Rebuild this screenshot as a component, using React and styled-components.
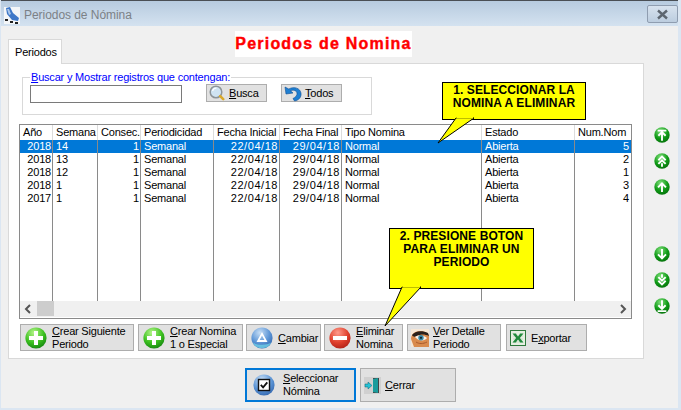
import React from 'react';
import styled, { createGlobalStyle } from 'styled-components';

const Global = createGlobalStyle`
  html, body { margin: 0; padding: 0; background: #f0f0f0; }
  body { font-family: "Liberation Sans", Arial, sans-serif; font-size: 11px; letter-spacing: -0.2px; color: #000; }
`;

const Window = styled.div`
  width: 681px;
  height: 410px;
  box-sizing: border-box;
  overflow: hidden;
  background: #f0f0f0;
  border-left: 1px solid #dbe6f2;
  border-right: 3px solid #dbe6f2;
  border-bottom: 2px solid #dbe6f2;
  position: relative;
`;

const TitleBar = styled.div`
  height: 26px;
  box-sizing: border-box;
  margin: 0 -3px 0 -1px;
  padding: 6px 3px 0 4px;
  display: flex;
  align-items: flex-start;
  gap: 4px;
  border-top: 1px solid #4a4f55;
  background: linear-gradient(#b7cbdf, #d4e2f0);
`;

const TitleText = styled.span`
  color: #7c8186;
  font-size: 12px;
  letter-spacing: -0.05px;
  line-height: 16px;
  flex: 1;
`;

const CloseButton = styled.div`
  width: 31px;
  height: 18px;
  margin-top: -2px;
  box-sizing: border-box;
  border: 1px solid #8f9db0;
  border-radius: 2px;
  background: linear-gradient(#d7e2ee, #bccddf);
  display: flex;
  align-items: center;
  justify-content: center;
`;

const Body = styled.div`
  padding: 5px 0 0 7px;
`;

const TabStrip = styled.div`
  height: 32px;
  display: flex;
  align-items: flex-start;
`;

const Tab = styled.div`
  width: 54px;
  height: 25px;
  margin-top: 8px;
  box-sizing: border-box;
  position: relative;
  z-index: 1;
  background: #fff;
  border: 1px solid #d9d9d9;
  border-bottom: none;
  padding: 6px 0 0 6px;
  line-height: 13px;
`;

const Heading = styled.h1`
  margin: 0 0 0 173px;
  height: 26px;
  width: 177px;
  background: #fff;
  color: #ff0000;
  font-size: 16px;
  font-weight: bold;
  line-height: 25px;
  letter-spacing: 1.2px;
  white-space: nowrap;
  text-align: center;
  -webkit-text-stroke: 0.4px #ff0000;
`;

const Content = styled.div`
  display: flex;
  align-items: flex-start;
`;

const Panel = styled.div`
  position: relative;
  width: 636px;
  height: 296px;
  box-sizing: border-box;
  background: #fff;
  border: 1px solid #d9d9d9;
  padding: 6px 0 0 10px;
`;

const SearchGroup = styled.fieldset`
  margin: 0 0 9px 3px;
  padding: 0 0 0 7px;
  width: 350px;
  height: 45px;
  box-sizing: border-box;
  border: 1px solid #d9d9d9;
  min-width: 0;
`;

const SearchLegend = styled.legend`
  color: #0000ff;
  font-size: 11px;
  line-height: 13px;
  padding: 1px 1px 0;
  margin-left: 0;
`;

const SearchRow = styled.div`
  display: flex;
  align-items: flex-start;
`;

const SearchInput = styled.div`
  width: 152px;
  height: 18px;
  box-sizing: border-box;
  border: 1px solid #7a7a7a;
  margin: 1px 24px 0 0;
`;

const SmallButton = styled.div`
  width: 61px;
  height: 18px;
  margin-right: 14px;
  box-sizing: border-box;
  background: #e1e1e1;
  border: 1px solid #adadad;
  display: flex;
  align-items: center;
  gap: 3px;
  padding-left: 2px;
  line-height: 13px;
`;

const Grid = styled.div`
  width: 613px;
  height: 195px;
  box-sizing: border-box;
  border: 1px solid #8a8a8a;
  display: flex;
  flex-direction: column;
`;

const Table = styled.table`
  border-collapse: separate;
  border-spacing: 0;
  table-layout: fixed;
  width: 611px;
  flex: none;
`;

const HeadCell = styled.th`
  height: 15px;
  padding: 0 0 0 3px;
  font-weight: normal;
  font-size: 11px;
  line-height: 13px;
  text-align: left;
  white-space: nowrap;
  overflow: hidden;
  box-sizing: border-box;
  border-right: 1px solid ${p => (p.$last ? 'transparent' : '#dcdcdc')};
`;

const Cell = styled.td`
  height: 13px;
  padding: ${p => (p.$right ? '0 1px 0 0' : '0 0 0 3px')};
  font-size: 11px;
  line-height: 13px;
  letter-spacing: ${p => (p.$wide ? '0.55px' : '-0.2px')};
  text-align: ${p => (p.$right ? 'right' : 'left')};
  white-space: nowrap;
  overflow: hidden;
  box-sizing: border-box;
  color: ${p => (p.$selected ? '#fff' : '#000')};
  background: ${p => (p.$selected ? '#0078d7' : '#fff')};
  border-right: 1px solid ${p => (p.$last ? 'transparent' : '#8a8a8a')};
`;

const FillerCell = styled.td`
  height: 96px;
  padding: 0;
  box-sizing: border-box;
  border-right: 1px solid ${p => (p.$last ? 'transparent' : '#8a8a8a')};
`;

const ScrollBar = styled.div`
  height: 16px;
  flex: none;
  background: #f0f0f0;
  display: flex;
  align-items: center;
  justify-content: space-between;
  padding: 0 4px;
  position: relative;
`;

const ScrollThumb = styled.div`
  position: absolute;
  left: 17px;
  top: 0;
  width: 17px;
  height: 15px;
  background: #cdcdcd;
`;

const ActionRow = styled.div`
  display: flex;
  margin: 5px 0 0 1px;
`;

const ActionButton = styled.div`
  width: ${p => p.$w}px;
  height: 27px;
  margin-right: ${p => p.$gap}px;
  box-sizing: border-box;
  background: #e1e1e1;
  border: 1px solid #adadad;
  display: flex;
  align-items: center;
  gap: ${p => p.$iconGap ?? 5}px;
  padding-left: ${p => p.$pad ?? 4}px;
  line-height: 13px;
  white-space: nowrap;

  & > span {
    padding-top: 1px;
  }
`;

const SideColumn = styled.div`
  display: flex;
  flex-direction: column;
  gap: 10px;
  margin-left: 10px;
  padding-top: 64px;
`;

const SideGap = styled.div`
  height: 31px;
`;

const BottomRow = styled.div`
  display: flex;
  gap: 4px;
  margin: 9px 0 0 237px;
`;

const BottomButton = styled.div`
  width: ${p => p.$w}px;
  height: 34px;
  box-sizing: border-box;
  background: #e1e1e1;
  border: ${p => (p.$focus ? '2px solid #0078d7' : '1px solid #adadad')};
  display: flex;
  align-items: center;
  gap: ${p => p.$iconGap}px;
  padding-left: ${p => p.$pad}px;
  line-height: 13px;
`;

const Callout = styled.div`
  position: absolute;
  z-index: 2;
  left: ${p => p.$x}px;
  top: ${p => p.$y}px;
  width: ${p => p.$w}px;
  height: ${p => p.$h}px;
  box-sizing: border-box;
  background: #ffff00;
  border: 1px solid #000;
  padding-top: 1px;
  text-align: center;
  font-size: 12px;
  font-weight: bold;
  line-height: 13px;
  letter-spacing: 0.1px;
`;

const Tail = styled.svg`
  position: absolute;
  left: -8px;
  top: 100%;
  overflow: visible;
`;

const GradBall = ({ size = 22, tone = 'green', children }) => {
  const stops = {
    green: ['#b5f58a', '#3cc020', '#0d7a0d'],
    dark: ['#7fe07a', '#0f9a16', '#056a0a'],
    blue: ['#c7def5', '#5c95d6', '#2c5fa8'],
    red: ['#ff9c8c', '#e0402c', '#a81c14'],
  }[tone];
  const id = `ball-${tone}-${size}`;
  return (
    <svg width={size} height={size} viewBox="0 0 22 22" style={{ flex: 'none' }}>
      <defs>
        <radialGradient id={id} cx="40%" cy="25%" r="85%">
          <stop offset="0%" stopColor={stops[0]} />
          <stop offset="55%" stopColor={stops[1]} />
          <stop offset="100%" stopColor={stops[2]} />
        </radialGradient>
      </defs>
      <circle cx="11" cy="11" r="10.6" fill={`url(#${id})`} />
      {children}
    </svg>
  );
};

const PlusBall = () => (
  <GradBall>
    <path d="M9 4h4v5h5v4h-5v5H9v-5H4V9h5z" fill="#fff" />
  </GradBall>
);

const TriangleBall = () => (
  <GradBall tone="blue">
    <path d="M2 15.500c4 3 14 3 18 0-1.500 4-5 5.600-9 5.600S3.500 19.500 2 15.500z" fill="#6fd0e6" opacity="0.8" />
    <path d="M11 5l5.500 10h-11z M11 8.600L8.600 13h4.800z" fill="#fff" fillRule="evenodd" />
  </GradBall>
);

const MinusBall = () => (
  <GradBall tone="red">
    <rect x="4" y="9" width="14" height="4" fill="#fff" />
  </GradBall>
);

const CheckBall = () => (
  <GradBall tone="blue">
    <rect x="5.500" y="5.500" width="11" height="11" fill="#fff" stroke="#111" strokeWidth="1.400" />
    <path d="M7.800 10.800l2.300 2.500 4.200-5" fill="none" stroke="#111" strokeWidth="1.800" />
  </GradBall>
);

const Magnifier = () => (
  <svg width="17" height="16" viewBox="0 0 17 16" style={{ flex: 'none' }}>
    <circle cx="7" cy="7" r="5.800" fill="#cfe3f2" stroke="#8d9499" strokeWidth="1.500" />
    <path d="M3.500 6c.5-2 2-3 4-3" stroke="#fff" strokeWidth="1.200" fill="none" />
    <path d="M11.200 11.200l3 3" stroke="#d9a92c" strokeWidth="2.600" strokeLinecap="round" />
  </svg>
);

const UndoIcon = () => (
  <svg width="18" height="17" viewBox="0 0 18 17" style={{ flex: 'none' }}>
    <path d="M1 2l1 7 7-1-2.500-2.200c2.500-1.300 6-.5 6.500 2.200.4 2.300-1.500 4.400-4 5.500L10.500 16c4.500-.7 7-4 6.500-7.800C16.300 3.200 10 1 4.800 4z" fill="#1f7fd1" stroke="#0f4f96" strokeWidth="0.600" />
  </svg>
);

const EyeIcon = () => (
  <svg width="18" height="18" viewBox="0 0 18 18" style={{ flex: 'none' }}>
    <rect width="18" height="18" fill="#f6e7d6" />
    <path d="M0 10c0-4 3-8 9-8s8 3 9 4v12H3z" fill="#d98a4c" />
    <path d="M1 6c3-4 10-5 16-2l1 3c-4-2-9-2-12 0-2 1-4 1-5-1z" fill="#2b211c" />
    <path d="M4 8c3-2 8-2 12 1-2 3-8 4-12-1z" fill="#f4f1ea" />
    <circle cx="10" cy="8.800" r="2.700" fill="#3a87a5" />
    <circle cx="10" cy="8.800" r="1.100" fill="#10222b" />
    <path d="M5 13c3 2 7 2 11 0" stroke="#a8592c" fill="none" />
  </svg>
);

const ExcelIcon = () => (
  <svg width="16" height="16" viewBox="0 0 16 16" style={{ flex: 'none' }}>
    <rect x="0.500" y="0.500" width="15" height="15" fill="#e6efe2" stroke="#2f7a3d" />
    <path d="M3 6h10 M3 9h10 M3 12h10 M6 3v10 M10 3v10" stroke="#b9d4ba" strokeWidth="0.700" />
    <path d="M2.500 3.500h3.200L8 6.500l2.300-3h3.200L9.800 8l3.700 4.500h-3.200L8 9.500l-2.300 3H2.500L6.200 8z" fill="#1f8a3b" />
  </svg>
);

const DoorIcon = () => (
  <svg width="17" height="17" viewBox="0 0 17 17" style={{ flex: 'none' }}>
    <rect x="0" y="0" width="17" height="17" fill="#d0d0d0" />
    <rect x="9" y="1" width="6" height="15" fill="#444" />
    <path d="M9 2l5-1v15l-5-1z" fill="#1a9c9c" />
    <path d="M1 7h3V5l4 3.500L4 12v-2H1z" fill="#26c2d6" stroke="#0a6670" strokeWidth="0.500" />
  </svg>
);

const NavBall = ({ paths }) => (
  <GradBall size={16} tone="dark">
    <path d={paths} fill="none" stroke="#fff" strokeWidth="2.600" />
  </GradBall>
);

const NAV_UP = [
  'M5 5h12 M11 19V8 M6 12l5-5 5 5',
  'M6 10l5-5 5 5 M6 15l5-5 5 5 M11 19v-5',
  'M11 18V6 M5.500 11.500L11 6l5.500 5.500',
];
const NAV_DOWN = [
  'M11 4v13 M5.500 11.500L11 17l5.500-5.500',
  'M11 3v5 M6 7l5 5 5-5 M6 12l5 5 5-5',
  'M11 3v12 M6 10l5 5 5-5 M5 18h12',
];

const COLUMNS = [
  { label: 'Año', width: 33, key: 'year', right: true },
  { label: 'Semana', width: 45, key: 'week' },
  { label: 'Consec.', width: 43, key: 'seq', right: true },
  { label: 'Periodicidad', width: 73, key: 'period' },
  { label: 'Fecha Inicial', width: 66, key: 'start', right: true, wide: true },
  { label: 'Fecha Final', width: 62, key: 'end', right: true, wide: true },
  { label: 'Tipo Nomina', width: 140, key: 'type' },
  { label: 'Estado', width: 93, key: 'state' },
  { label: 'Num.Nom', width: 56, key: 'num', right: true },
];

const base = { seq: 1, period: 'Semanal', start: '22/04/18', end: '29/04/18', type: 'Normal', state: 'Abierta' };
const ROWS = [
  { ...base, year: 2018, week: 14, num: 5 },
  { ...base, year: 2018, week: 13, num: 2 },
  { ...base, year: 2018, week: 12, num: 1 },
  { ...base, year: 2018, week: 1, num: 3 },
  { ...base, year: 2017, week: 1, num: 4 },
];

const App = () => (
  <Window>
    <Global />
    <TitleBar>
      <svg width="16" height="17" viewBox="0 0 16 17" style={{ flex: 'none' }}>
        <rect width="16" height="17" fill="#f4f6f8" />
        <path d="M2 1l4-1 3 6 6 5-1 3-6-1-5-6z" fill="#3f78c8" />
        <path d="M3 2l2 0 2 5-2 1z" fill="#a9c6ea" />
        <path d="M1 12h3v2H1z M6 14h3v2H6z M11 15h3v2h-3z" fill="#222" />
      </svg>
      <TitleText>Periodos de Nómina</TitleText>
      <CloseButton>
        <svg width="13" height="11" viewBox="0 0 13 11">
          <path d="M2 1.500l9 8 M11 1.500l-9 8" stroke="#5d6670" strokeWidth="2.400" fill="none" />
        </svg>
      </CloseButton>
    </TitleBar>
    <Body>
      <TabStrip>
        <Tab>Periodos</Tab>
        <Heading>Periodos de Nomina</Heading>
      </TabStrip>
      <Content>
        <Panel>
          <SearchGroup>
            <SearchLegend><u>B</u>uscar y Mostrar registros que contengan:</SearchLegend>
            <SearchRow>
              <SearchInput />
              <SmallButton><Magnifier /><span><u>B</u>usca</span></SmallButton>
              <SmallButton><UndoIcon /><span><u>T</u>odos</span></SmallButton>
            </SearchRow>
          </SearchGroup>
          <Grid>
            <Table>
              <colgroup>
                {COLUMNS.map(c => <col key={c.key} style={{ width: c.width }} />)}
              </colgroup>
              <thead>
                <tr>
                  {COLUMNS.map((c, i) => (
                    <HeadCell key={c.key} $last={i === COLUMNS.length - 1}>{c.label}</HeadCell>
                  ))}
                </tr>
              </thead>
              <tbody>
                {ROWS.map((r, ri) => (
                  <tr key={ri}>
                    {COLUMNS.map((c, i) => (
                      <Cell
                        key={c.key}
                        $right={c.right}
                        $wide={c.wide}
                        $selected={ri === 0}
                        $last={i === COLUMNS.length - 1}
                      >
                        {r[c.key]}
                      </Cell>
                    ))}
                  </tr>
                ))}
                <tr>
                  {COLUMNS.map((c, i) => <FillerCell key={c.key} $last={i === COLUMNS.length - 1} />)}
                </tr>
              </tbody>
            </Table>
            <ScrollBar>
              <ScrollThumb />
              <svg width="8" height="10" viewBox="0 0 8 10">
                <path d="M6 1L2 5l4 4" stroke="#555" strokeWidth="2" fill="none" />
              </svg>
              <svg width="8" height="10" viewBox="0 0 8 10">
                <path d="M2 1l4 4-4 4" stroke="#555" strokeWidth="2" fill="none" />
              </svg>
            </ScrollBar>
          </Grid>
          <ActionRow>
            <ActionButton $w={114} $gap={4}><PlusBall /><span><u>C</u>rear Siguiente<br />Periodo</span></ActionButton>
            <ActionButton $w={105} $gap={3}><PlusBall /><span><u>C</u>rear Nomina<br />1 o Especial</span></ActionButton>
            <ActionButton $w={75} $gap={3}><TriangleBall /><span><u>C</u>ambiar</span></ActionButton>
            <ActionButton $w={79} $gap={4}><MinusBall /><span><u>E</u>liminar<br />Nomina</span></ActionButton>
            <ActionButton $w={94} $gap={5} $pad={3} $iconGap={4}><EyeIcon /><span><u>V</u>er Detalle<br />Periodo</span></ActionButton>
            <ActionButton $w={81} $gap={0} $pad={3}><ExcelIcon /><span>E<u>x</u>portar</span></ActionButton>
          </ActionRow>
          <Callout $x={433} $y={18} $w={144} $h={38}>
            1. SELECCIONAR LA<br />NOMINA A ELIMINAR
            <Tail width="45" height="26">
              <path d="M21 -1L3 24L39 -1z" fill="#ffff00" stroke="#000" />
              <path d="M21.500 -1.500h16.500" stroke="#ffff00" strokeWidth="2" />
            </Tail>
          </Callout>
          <Callout $x={380} $y={164} $w={145} $h={61}>
            2. PRESIONE BOTON<br />PARA ELIMINAR UN<br />PERIODO
            <Tail width="45" height="40">
              <path d="M20 -1L3 38L39 -1z" fill="#ffff00" stroke="#000" />
              <path d="M20.500 -1.500h17.500" stroke="#ffff00" strokeWidth="2" />
            </Tail>
          </Callout>
        </Panel>
        <SideColumn>
          {NAV_UP.map(p => <NavBall key={p} paths={p} />)}
          <SideGap />
          {NAV_DOWN.map(p => <NavBall key={p} paths={p} />)}
        </SideColumn>
      </Content>
      <BottomRow>
        <BottomButton $w={111} $focus $pad={6} $iconGap={8}><CheckBall /><span><u>S</u>eleccionar<br />Nómina</span></BottomButton>
        <BottomButton $w={96} $pad={3} $iconGap={4}><DoorIcon /><span><u>C</u>errar</span></BottomButton>
      </BottomRow>
    </Body>
  </Window>
);

export default App;
